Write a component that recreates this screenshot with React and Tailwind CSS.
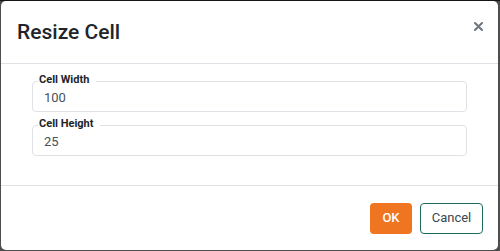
import React from "react";

function Field({ label, value }) {
  return (
    <fieldset className="border border-[#dee2e6] rounded-[4px] p-0 m-0 min-w-0">
      <legend className="ml-[5px] pl-px pr-[7px] pb-[3px] text-[11px] leading-[13px] font-bold text-[#212529]">
        {label}
      </legend>
      <div className="pl-[11px] pb-[5px] text-[13px] leading-[17px] text-[#495057]">{value}</div>
    </fieldset>
  );
}

export default function App() {
  return (
    <div
      className="w-[500px] h-[251px] bg-[#4d4d4d] border-t border-[#141414] pl-px pr-[2px] pb-px flex"
      style={{ fontFamily: "Roboto, 'Liberation Sans', sans-serif" }}
    >
      <div className="flex-1 bg-white rounded-[5px] flex flex-col">
        <div className="h-[63px] border-b border-[#dee2e6] flex items-center justify-between pl-4 pr-[15px] shrink-0">
          <h1 className="text-[21px] leading-[24px] font-medium text-[#212529]">Resize Cell</h1>
          <svg width="9" height="9" viewBox="0 0 9 9" className="self-start mt-[21px]">
            <path d="M1 1 L8 8 M8 1 L1 8" stroke="#6c757d" strokeWidth="2" strokeLinecap="round" />
          </svg>
        </div>
        <div className="h-[122px] pt-[9px] px-[31px] border-b border-[#dee2e6] shrink-0 flex flex-col gap-[5px]">
          <Field label="Cell Width" value="100" />
          <Field label="Cell Height" value="25" />
        </div>
        <div className="flex-1 flex items-center justify-end gap-2 pr-[15px]">
          <button className="w-[42px] h-[31px] rounded-[4px] bg-[#ef7521] text-white text-[13px] font-medium flex items-center justify-center">
            OK
          </button>
          <button className="w-[63px] h-[31px] rounded-[4px] border border-[#1d6b5f] text-[#37474f] text-[13px] flex items-center justify-center">
            Cancel
          </button>
        </div>
      </div>
    </div>
  );
}
